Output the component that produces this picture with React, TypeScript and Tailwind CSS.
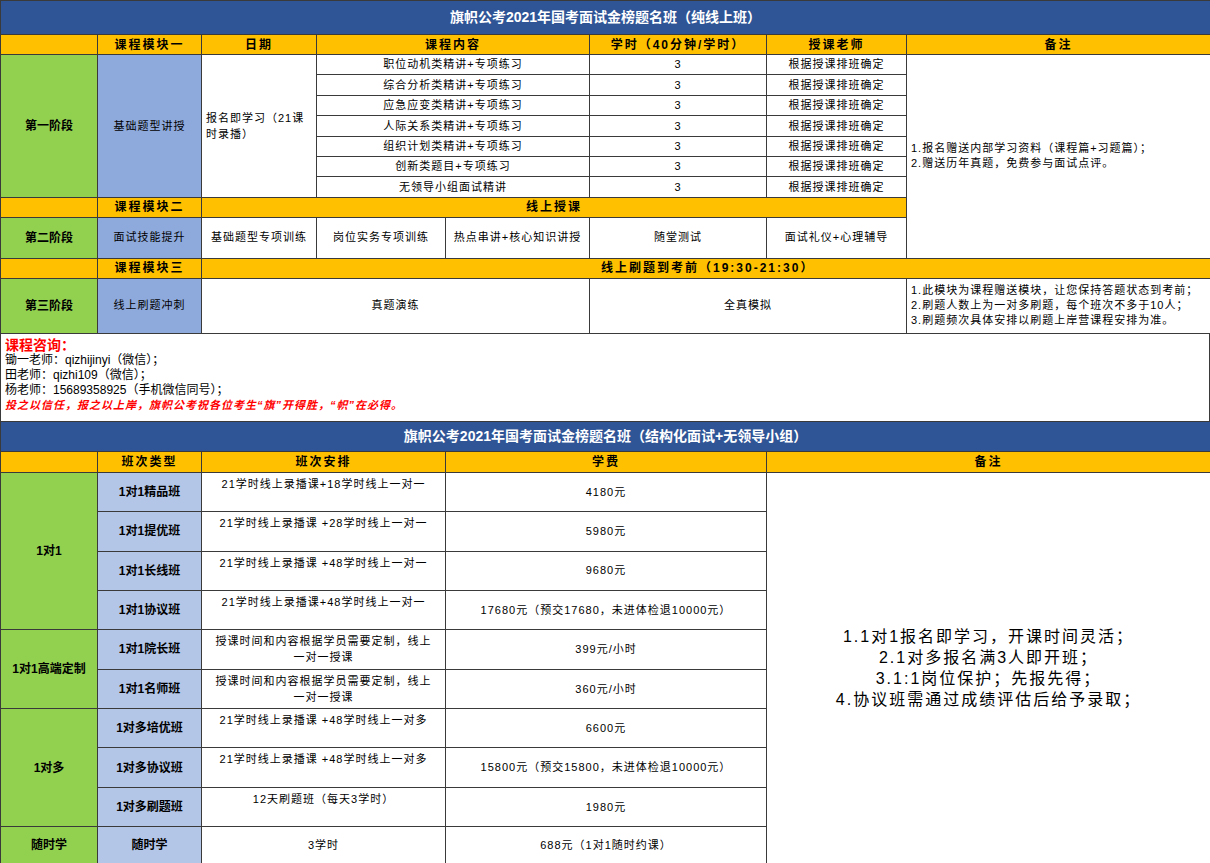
import React from "react";

const font = { fontFamily: '"Liberation Sans", "Noto Sans CJK SC", sans-serif' };

const B = "border border-[#3a3a3a]";
const Y = `${B} bg-[#FFC000] font-bold text-[12px] tracking-[2px]`;
const G = `${B} bg-[#92D050] font-bold text-[12px]`;
const BL = `${B} bg-[#8EA9DB] text-[11px] tracking-[1px]`;
const W = `${B} bg-white text-[11px] tracking-[1px]`;

const courses = [
  "职位动机类精讲+专项练习",
  "综合分析类精讲+专项练习",
  "应急应变类精讲+专项练习",
  "人际关系类精讲+专项练习",
  "组织计划类精讲+专项练习",
  "创新类题目+专项练习",
  "无领导小组面试精讲",
];

type Row = { name: string; plan: string; fee: string };
const groups: { label: string; rows: Row[] }[] = [
  {
    label: "1对1",
    rows: [
      { name: "1对1精品班", plan: "21学时线上录播课+18学时线上一对一", fee: "4180元" },
      { name: "1对1提优班", plan: "21学时线上录播课 +28学时线上一对一", fee: "5980元" },
      { name: "1对1长线班", plan: "21学时线上录播课 +48学时线上一对一", fee: "9680元" },
      { name: "1对1协议班", plan: "21学时线上录播课+48学时线上一对一", fee: "17680元（预交17680，未进体检退10000元）" },
    ],
  },
  {
    label: "1对1高端定制",
    rows: [
      { name: "1对1院长班", plan: "授课时间和内容根据学员需要定制，线上一对一授课", fee: "399元/小时" },
      { name: "1对1名师班", plan: "授课时间和内容根据学员需要定制，线上一对一授课", fee: "360元/小时" },
    ],
  },
  {
    label: "1对多",
    rows: [
      { name: "1对多培优班", plan: "21学时线上录播课 +48学时线上一对多", fee: "6600元" },
      { name: "1对多协议班", plan: "21学时线上录播课 +48学时线上一对多", fee: "15800元（预交15800，未进体检退10000元）" },
      { name: "1对多刷题班", plan: "12天刷题班（每天3学时）", fee: "1980元" },
    ],
  },
];

export default function App() {
  return (
    <div className="w-[1210px] h-[863px] overflow-hidden bg-white text-black" style={font}>
      <table className="w-[1210px] table-fixed border-collapse text-center">
        <colgroup>
          <col className="w-[97px]" />
          <col className="w-[104px]" />
          <col className="w-[115px]" />
          <col className="w-[129px]" />
          <col className="w-[144px]" />
          <col className="w-[177px]" />
          <col className="w-[140px]" />
          <col className="w-[304px]" />
        </colgroup>
        <tbody>
          <tr className="h-[34px]">
            <td colSpan={8} className={`${B} bg-[#2F5597] text-white font-bold text-[14px]`}>
              旗帜公考2021年国考面试金榜题名班（纯线上班）
            </td>
          </tr>
          <tr className="h-[20px]">
            <td className={Y}></td>
            <td className={Y}>课程模块一</td>
            <td className={Y}>日期</td>
            <td colSpan={2} className={Y}>课程内容</td>
            <td className={Y}>学时（40分钟/学时）</td>
            <td className={Y}>授课老师</td>
            <td className={Y}>备注</td>
          </tr>
          {courses.map((c, i) => (
            <tr key={c} className="h-[20.4px]">
              {i === 0 && (
                <>
                  <td rowSpan={7} className={G}>第一阶段</td>
                  <td rowSpan={7} className={BL}>基础题型讲授</td>
                  <td rowSpan={7} className={`${W} text-left px-1 leading-[16px]`}>
                    报名即学习（21课时录播）
                  </td>
                </>
              )}
              <td colSpan={2} className={W}>{c}</td>
              <td className={W}>3</td>
              <td className={W}>根据授课排班确定</td>
              {i === 0 && (
                <td rowSpan={9} className={`${W} text-left px-1 leading-[15px]`}>
                  1.报名赠送内部学习资料（课程篇+习题篇）；<br />
                  2.赠送历年真题，免费参与面试点评。
                </td>
              )}
            </tr>
          ))}
          <tr className="h-[20px]">
            <td className={Y}></td>
            <td className={Y}>课程模块二</td>
            <td colSpan={5} className={Y}>线上授课</td>
          </tr>
          <tr className="h-[41px]">
            <td className={G}>第二阶段</td>
            <td className={BL}>面试技能提升</td>
            <td className={W}>基础题型专项训练</td>
            <td className={W}>岗位实务专项训练</td>
            <td className={W}>热点串讲+核心知识讲授</td>
            <td className={W}>随堂测试</td>
            <td className={W}>面试礼仪+心理辅导</td>
          </tr>
          <tr className="h-[20px]">
            <td className={Y}></td>
            <td className={Y}>课程模块三</td>
            <td colSpan={6} className={`${Y} text-left pl-[399px]`}>线上刷题到考前（19:30-21:30）</td>
          </tr>
          <tr className="h-[55px]">
            <td className={G}>第三阶段</td>
            <td className={BL}>线上刷题冲刺</td>
            <td colSpan={3} className={W}>真题演练</td>
            <td colSpan={2} className={W}>全真模拟</td>
            <td className={`${W} text-left px-1 leading-[15px]`}>
              1.此模块为课程赠送模块，让您保持答题状态到考前；<br />
              2.刷题人数上为一对多刷题，每个班次不多于10人；<br />
              3.刷题频次具体安排以刷题上岸营课程安排为准。
            </td>
          </tr>
        </tbody>
      </table>

      <div className="h-[87px] px-[4px] pt-[3px] text-[12px] leading-[15px] border-x border-[#3a3a3a]">
        <div className="text-[#FF0000] font-bold text-[14px] leading-[16px]">课程咨询：</div>
        <div>锄一老师：qizhijinyi（微信）；</div>
        <div>田老师：qizhi109（微信）；</div>
        <div>杨老师：15689358925（手机微信同号）；</div>
        <div className="text-[#FF0000] italic font-bold text-[11px] tracking-[1px]">
          投之以信任，报之以上岸，旗帜公考祝各位考生“旗”开得胜，“帜”在必得。
        </div>
      </div>

      <table className="w-[1210px] table-fixed border-collapse text-center">
        <colgroup>
          <col className="w-[97px]" />
          <col className="w-[104px]" />
          <col className="w-[244px]" />
          <col className="w-[321px]" />
          <col className="w-[444px]" />
        </colgroup>
        <tbody>
          <tr className="h-[30px]">
            <td colSpan={5} className={`${B} bg-[#2F5597] text-white font-bold text-[14px]`}>
              旗帜公考2021年国考面试金榜题名班（结构化面试+无领导小组）
            </td>
          </tr>
          <tr className="h-[21px]">
            <td className={Y}></td>
            <td className={Y}>班次类型</td>
            <td className={Y}>班次安排</td>
            <td className={Y}>学费</td>
            <td className={Y}>备注</td>
          </tr>
          {groups.map((g, gi) =>
            g.rows.map((r, ri) => (
              <tr key={r.name} className="h-[39.4px]">
                {ri === 0 && (
                  <td rowSpan={g.rows.length} className={G}>{g.label}</td>
                )}
                <td className={`${B} bg-[#B4C6E7] font-bold text-[12px]`}>{r.name}</td>
                <td className={`${W} align-top pt-[3px] px-3 leading-[16px]`}>{r.plan}</td>
                <td className={W}>{r.fee}</td>
                {gi === 0 && ri === 0 && (
                  <td rowSpan={10} className={`${W} text-[16px] tracking-[2px] leading-[21px]`}>
                    1.1对1报名即学习，开课时间灵活；<br />
                    2.1对多报名满3人即开班；<br />
                    3.1:1岗位保护；先报先得；<br />
                    4.协议班需通过成绩评估后给予录取；
                  </td>
                )}
              </tr>
            ))
          )}
          <tr className="h-[37px]">
            <td className={G}>随时学</td>
            <td className={`${B} bg-[#B4C6E7] font-bold text-[12px]`}>随时学</td>
            <td className={W}>3学时</td>
            <td className={W}>688元（1对1随时约课）</td>
          </tr>
        </tbody>
      </table>
    </div>
  );
}
